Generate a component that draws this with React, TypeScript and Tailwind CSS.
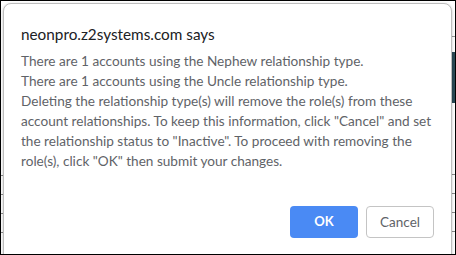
const lines = [
  'There are 1 accounts using the Nephew relationship type.',
  'There are 1 accounts using the Uncle relationship type.',
  'Deleting the relationship type(s) will remove the role(s) from these',
  'account relationships. To keep this information, click "Cancel" and set',
  'the relationship status to "Inactive". To proceed with removing the',
  'role(s), click "OK" then submit your changes.',
];

const rowMarks = [0, 1, 2, 3];

const App = () => {
  return (
    <div className="relative flex h-[255px] w-[456px] justify-between overflow-hidden border border-black bg-white font-['Lato','Segoe_UI',sans-serif]">
      {/* page behind the dialog: table rows peeking out on both sides */}
      <div className="flex w-[3px] flex-col gap-[18px] pt-[174px]">
        {rowMarks.map((i) => (
          <div key={i} className="h-px bg-[#8a8a8a]" />
        ))}
      </div>
      <div className="flex w-[6px] flex-col pt-[35px]">
        <div className="h-px bg-[#9a9a9a]" />
        <div className="mt-[15px] h-[51px] bg-[#2a4a55]" />
        <div className="mt-[71px] flex flex-col gap-[18px]">
          {rowMarks.map((i) => (
            <div key={i} className="h-px bg-[#8a8a8a]" />
          ))}
        </div>
      </div>

      {/* dialog */}
      <div className="absolute top-[2px] left-[2px] h-[270px] w-[449px] rounded-[8px] border border-[#bdbdbd] bg-white shadow-[0_1px_3px_rgba(0,0,0,0.25)]">
        <div className="flex flex-col px-[17px] pt-[18px]">
          <h2 className="text-[15.3px] leading-[24px] text-[#202124]">neonpro.z2systems.com says</h2>
          <div className="mt-[5px] text-[13.6px] leading-[20px] text-[#5f6368]">
            {lines.map((l) => (
              <div key={l} className="whitespace-nowrap">
                {l}
              </div>
            ))}
          </div>
          <div className="mt-[35px] flex justify-end gap-[8px]">
            <button className="h-[32px] w-[68px] rounded-[4px] bg-[#4a8af4] text-[13px] font-bold text-white">
              OK
            </button>
            <button className="h-[32px] w-[68px] rounded-[4px] border border-[#c4c4c4] bg-white text-[13.5px] text-[#5f6368]">
              Cancel
            </button>
          </div>
        </div>
      </div>
    </div>
  );
};

export default App;
